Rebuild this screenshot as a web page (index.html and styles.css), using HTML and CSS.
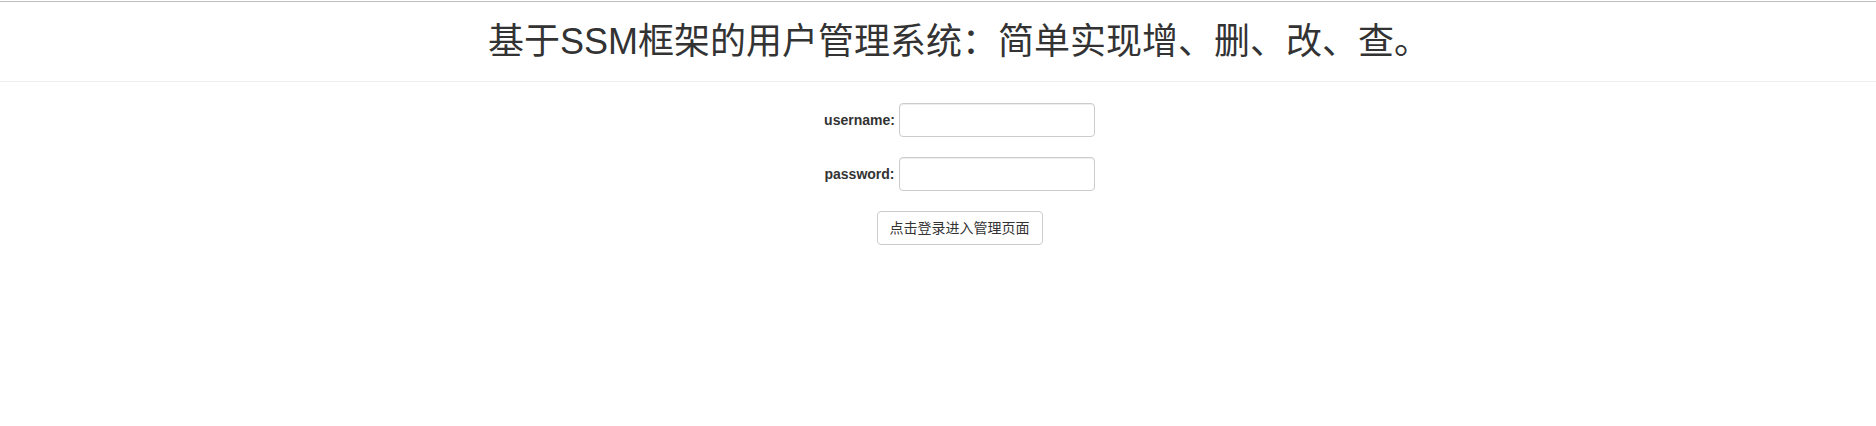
FILE: index.html
```html
<!DOCTYPE html>
<html lang="zh-CN">
<head>
<meta charset="utf-8">
<title>用户管理系统</title>
<link rel="stylesheet" href="styles.css">
</head>
<body>
<div class="topline"></div>
<header class="page-header">
  <h1 class="title">基于SSM框架的用户管理系统：简单实现增、删、改、查。</h1>
</header>
<form class="login-form">
  <div class="form-row">
    <label class="form-label" for="username">username:</label>
    <input class="form-input" type="text" id="username" name="username">
  </div>
  <div class="form-row">
    <label class="form-label" for="password">password:</label>
    <input class="form-input" type="password" id="password" name="password">
  </div>
  <div class="form-row">
    <button class="btn" type="submit">点击登录进入管理页面</button>
  </div>
</form>
</body>
</html>
```
FILE: styles.css
```css
html, body {
  margin: 0;
  padding: 0;
  background: #fff;
}
body {
  font-family: "Liberation Sans", Arial, "Noto Sans CJK SC", sans-serif;
  color: #333;
  font-size: 14px;
}
.topline {
  margin-top: 1px;
  border-top: 1px solid #bdbdbd;
}
.page-header {
  padding: 20px 0 19px;
  border-bottom: 1px solid #eee;
  text-align: center;
}
.title {
  margin: 0;
  font-size: 36px;
  font-weight: 400;
  line-height: 40px;
  color: #333;
  padding-left: 42px;
}
.login-form {
  display: flex;
  flex-direction: column;
  align-items: center;
  gap: 20px;
  padding-top: 21px;
  padding-left: 43px;
}
.form-row {
  display: flex;
  align-items: center;
  gap: 4px;
  height: 34px;
}
.form-label {
  font-weight: 700;
  font-size: 14px;
  color: #333;
}
.form-input {
  box-sizing: border-box;
  width: 196px;
  height: 34px;
  border: 1px solid #ccc;
  border-radius: 4px;
  box-shadow: inset 0 1px 1px rgba(0,0,0,0.075);
  padding: 6px 12px;
  font-size: 14px;
  margin: 0;
}
.btn {
  box-sizing: border-box;
  height: 34px;
  padding: 6px 12px;
  border: 1px solid #ccc;
  border-radius: 4px;
  background: #fff;
  color: #333;
  font-family: "Liberation Sans", Arial, "Noto Sans CJK SC", sans-serif;
  font-size: 14px;
  line-height: 20px;
  cursor: pointer;
}
```
